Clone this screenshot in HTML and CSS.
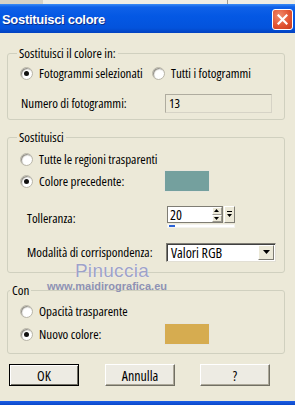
FILE: index.html
```html
<!DOCTYPE html>
<html lang="it">
<head>
    <meta charset="UTF-8">
    <title>Sostituisci colore</title>
    <link rel="stylesheet" href="styles.css">
</head>
<body>
    <div class="topstrip"><span class="topstrip-tab"></span><span class="topstrip-sep"></span></div>

    <!-- Title bar -->
    <div class="titlebar">
        <span class="title">Sostituisci colore</span>
        <span class="close">
            <svg width="11" height="11" viewBox="0 0 11 11"><path d="M1.5 1.5 L9.5 9.5 M9.5 1.5 L1.5 9.5" stroke="#fff" stroke-width="2.2" stroke-linecap="square"/></svg>
        </span>
    </div>

    <div class="client">
        <!-- Sostituisci il colore in -->
        <div class="group group-target">
            <div class="group-label">Sostituisci il colore in:</div>
            <div class="row row-radio">
                <label class="radio checked"><span class="dot"></span>Fotogrammi selezionati</label>
                <label class="radio"><span class="dot"></span>Tutti i fotogrammi</label>
            </div>
            <div class="row row-count">
                <span class="row-label">Numero di fotogrammi:</span>
                <span class="field field-disabled">13</span>
            </div>
        </div>

        <!-- Sostituisci -->
        <div class="group group-replace">
            <div class="group-label">Sostituisci</div>
            <div class="row row-radio">
                <label class="radio"><span class="dot"></span>Tutte le regioni trasparenti</label>
            </div>
            <div class="row row-radio">
                <label class="radio checked"><span class="dot"></span>Colore precedente:</label>
                <span class="swatch swatch-old"></span>
            </div>
            <div class="row row-tol">
                <span class="row-label row-label-low">Tolleranza:</span>
                <div class="spinner">
                    <div class="spinner-top">
                        <span class="spinner-input">20</span>
                        <span class="spinner-arrows">
                            <span class="spin-btn"><svg width="5" height="3" viewBox="0 0 5 3"><path d="M2.5 0 L5 3 L0 3 Z" fill="#000"/></svg></span>
                            <span class="spin-btn"><svg width="5" height="3" viewBox="0 0 5 3"><path d="M0 0 L5 0 L2.5 3 Z" fill="#000"/></svg></span>
                        </span>
                        <span class="spin-menu"><svg width="5" height="7" viewBox="0 0 5 7"><path d="M0 0 H5 V1 H0 Z M0 3 L5 3 L2.5 6 Z" fill="#000"/></svg></span>
                    </div>
                    <div class="spinner-bar"><span class="spinner-fill"></span></div>
                </div>
            </div>
            <div class="row row-mode">
                <span class="row-label">Modalità di corrispondenza:</span>
                <div class="select">
                    <span class="select-value">Valori RGB</span>
                    <span class="select-btn"><svg width="7" height="4" viewBox="0 0 7 4"><path d="M0 0 L7 0 L3.5 4 Z" fill="#000"/></svg></span>
                </div>
            </div>
        </div>

        <!-- Con -->
        <div class="group group-with">
            <div class="group-label">Con</div>
            <div class="row row-radio">
                <label class="radio"><span class="dot"></span>Opacità trasparente</label>
            </div>
            <div class="row row-radio">
                <label class="radio checked"><span class="dot"></span>Nuovo colore:</label>
                <span class="swatch swatch-new"></span>
            </div>
        </div>

        <div class="buttons">
            <button class="btn btn-default">OK</button>
            <button class="btn">Annulla</button>
            <button class="btn">?</button>
        </div>

        <div class="watermark">
            <div class="wm-name">Pinuccia</div>
            <div class="wm-url">www.maidirografica.eu</div>
        </div>
    </div>

    <div class="bottomstrip"></div>
</body>
</html>
```

FILE: styles.css
```css
body {
    margin: 0;
    width: 295px;
    height: 405px;
    overflow: hidden;
    display: flex;
    flex-direction: column;
    background-color: #ECE9D8;
    font-family: "Open Sans", "Liberation Sans", sans-serif;
    font-stretch: 75%;
    font-size: 13px;
    color: #000;
    white-space: nowrap;
}
.topstrip {
    height: 4px;
    display: flex;
    background-color: #EFEDE4;
}
.topstrip-tab {
    width: 43px;
    background-color: #D6D2C6;
}
.topstrip-sep {
    width: 1px;
    margin-left: 184px;
    background-color: #9C9A8E;
}
.titlebar {
    height: 29px;
    display: flex;
    align-items: center;
    justify-content: space-between;
    padding: 0 2px 0 2px;
    background: linear-gradient(#3B8CF5 0px, #0F61E8 3px, #0458E4 12px, #0353DC 24px, #0342C0 29px);
}
.title {
    color: #fff;
    font-family: "Liberation Sans", Arial, sans-serif;
    font-stretch: normal;
    font-weight: bold;
    font-size: 13px;
    letter-spacing: -0.3px;
    text-shadow: 1px 1px 0 #0B2F8A;
    margin-top: 1px;
}
.close {
    width: 19px;
    height: 19px;
    margin-top: 1px;
    display: flex;
    align-items: center;
    justify-content: center;
    border: 1px solid #fff;
    border-radius: 3px;
    background: radial-gradient(circle at 35% 30%, #F08A6C, #E0502E 60%, #C63A1C);
}
.client {
    position: relative;
    flex: 1;
    padding: 20px 0 0 7px;
}
.group {
    width: 278px;
    box-sizing: border-box;
    border: 1px solid #D0D0BF;
    border-radius: 3px;
}
.group-label {
    width: fit-content;
    margin: -7px 0 0 9px;
    padding: 0 2px;
    line-height: 13px;
    background-color: #ECE9D8;
}
.row {
    display: flex;
    align-items: center;
    line-height: 13px;
}
.row-radio {
    height: 22px;
    padding-left: 12px;
}
.radio {
    display: flex;
    align-items: center;
    width: 144px;
}
.dot {
    width: 11px;
    height: 11px;
    margin-right: 6px;
    border-radius: 50%;
    border: 1px solid #B9B6A9;
    background: radial-gradient(circle at 60% 65%, #fff 45%, #DCD9CF 100%);
    box-shadow: inset 1px 1px 1px #8E8C84;
    position: relative;
}
.radio.checked .dot::after {
    content: "";
    position: absolute;
    left: 3px;
    top: 3px;
    width: 5px;
    height: 5px;
    border-radius: 50%;
    background-color: #111;
}
.swatch {
    width: 46px;
    height: 22px;
    border: 1px solid #E8E6DC;
    box-sizing: border-box;
}
.swatch-old {
    background-color: #74A09E;
}
.swatch-new {
    background-color: #D6AC50;
}
.row-label {
    width: 144px;
    padding-left: 13px;
}
/* group 1 */
.group-target .row-radio {
    margin-top: 1px;
    height: 24px;
}
.row-count {
    margin-top: 8px;
    height: 20px;
}
.field {
    width: 107px;
    height: 19px;
    box-sizing: border-box;
    padding: 1px 3px;
    line-height: 15px;
}
.field-disabled {
    border: 1px solid #AFAC9F;
    border-right-color: #D6D3C6;
    border-bottom-color: #D6D3C6;
    background-color: #ECE9D8;
}
.group-target {
    padding-bottom: 6px;
}
/* group 2 */
.group-replace {
    margin-top: 17px;
    padding-bottom: 11px;
}
.group-replace .group-label + .row-radio {
    margin-top: 4px;
}
.group-replace .row-label {
    padding-left: 19px;
    width: 139px;
}
.row-tol {
    margin-top: 14px;
    align-items: flex-start;
}
.row-label-low {
    margin-top: 6px;
}
.spinner {
    margin-left: 1px;
    width: 68px;
}
.spinner-top {
    display: flex;
    height: 17px;
}
.spinner-input {
    width: 46px;
    box-sizing: border-box;
    padding: 1px 2px;
    border: 1px solid #7F7D74;
    border-right: none;
    background-color: #fff;
    font-size: 14px;
    line-height: 14px;
}
.spinner-arrows {
    display: flex;
    flex-direction: column;
    width: 11px;
    border: 1px solid #7F7D74;
    border-left: none;
    background-color: #fff;
}
.spin-btn {
    flex: 1;
    display: flex;
    align-items: center;
    justify-content: center;
    background-color: #ECE9D8;
    border-top: 1px solid #fff;
    border-left: 1px solid #fff;
    border-bottom: 1px solid #9C9A90;
    border-right: 1px solid #9C9A90;
}
.spin-menu {
    width: 9px;
    margin-left: 1px;
    display: flex;
    align-items: center;
    justify-content: center;
    background-color: #ECE9D8;
    border-top: 1px solid #fff;
    border-left: 1px solid #fff;
    border-bottom: 1px solid #7F7D74;
    border-right: 1px solid #7F7D74;
}
.spinner-bar {
    height: 4px;
    margin-top: 1px;
    background-color: #fff;
    border: 1px solid #F4F3EE;
    box-sizing: border-box;
    width: 68px;
}
.spinner-fill {
    display: block;
    width: 6px;
    height: 2px;
    margin-left: 1px;
    background-color: #2C63D6;
}
.row-mode {
    margin-top: 15px;
    height: 18px;
}
.select {
    width: 110px;
    height: 19px;
    box-sizing: border-box;
    display: flex;
    border: 1px solid #7F7D74;
    border-right-color: #E2DFD4;
    border-bottom-color: #E2DFD4;
    background-color: #fff;
    box-shadow: inset 1px 1px 0 #404040;
}
.select-value {
    flex: 1;
    padding: 1px 4px;
    font-size: 14px;
    line-height: 15px;
}
.select-btn {
    width: 14px;
    margin: 1px 1px 1px 0;
    display: flex;
    align-items: center;
    justify-content: center;
    background-color: #ECE9D8;
    border-top: 1px solid #fff;
    border-left: 1px solid #fff;
    border-bottom: 1px solid #7F7D74;
    border-right: 1px solid #7F7D74;
}
/* group 3 */
.group-with {
    margin-top: 17px;
    padding-bottom: 8px;
}
.group-with .group-label + .row-radio {
    margin-top: 3px;
}
.group-with .row-radio + .row-radio {
    margin-top: 1px;
}
.group-with .group-label {
    margin-left: 2px;
}
.buttons {
    display: flex;
    margin-top: 10px;
    padding-left: 2px;
}
.btn {
    width: 75px;
    height: 22px;
    padding: 0;
    font-family: "Open Sans", "Liberation Sans", sans-serif;
    font-stretch: 75%;
    font-size: 14px;
    color: #000;
    background-color: #EDEBE3;
    border-top: 1px solid #fff;
    border-left: 1px solid #fff;
    border-right: 1px solid #716F64;
    border-bottom: 1px solid #716F64;
    box-shadow: inset -1px -1px 0 #ACA899;
    margin-right: 25px;
}
.btn-default {
    border: 1px solid #000;
    box-shadow: inset 1px 1px 0 #fff, inset -1px -1px 0 #716F64;
    margin-right: 26px;
}
.watermark {
    position: absolute;
    left: 42px;
    top: 228px;
    width: 130px;
    text-align: center;
    color: #9EA2C8;
    pointer-events: none;
}
.wm-name {
    padding-left: 10px;
    font-family: "Liberation Sans", Arial, sans-serif;
    font-stretch: normal;
    font-size: 19px;
    line-height: 20px;
    letter-spacing: 0.3px;
    text-shadow: 0 0 1px #fff;
}
.wm-url {
    font-family: "Liberation Sans", Arial, sans-serif;
    font-stretch: normal;
    font-size: 11px;
    font-weight: bold;
    color: #8E92B4;
    line-height: 11px;
}
.bottomstrip {
    height: 4px;
    background: linear-gradient(#1C5EE6, #0A48C8);
}
```
